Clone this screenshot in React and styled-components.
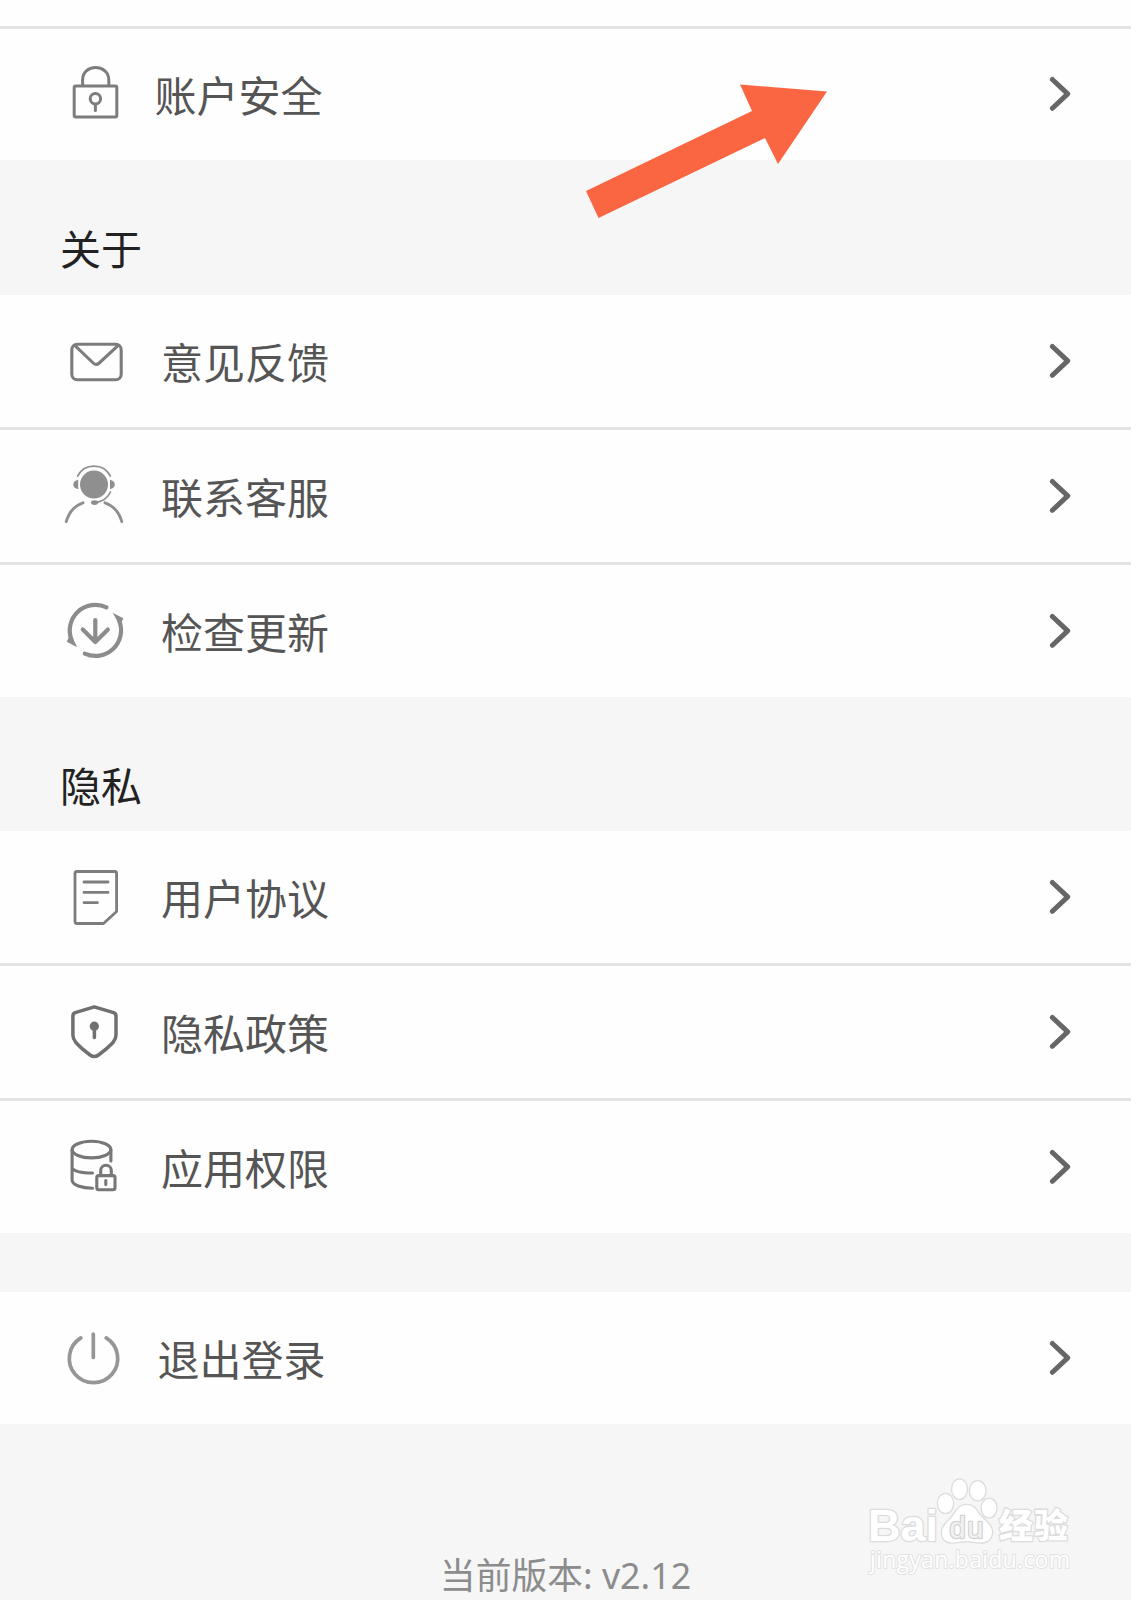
import styled, { createGlobalStyle } from "styled-components";

const GlobalStyle = createGlobalStyle`
  body {
    margin: 0;
    background-color: #f6f6f6;
  }
`;

const Page = styled.div`
  position: relative;
  display: flex;
  flex-direction: column;
  height: 1600px;
  overflow: hidden;
  background-color: #f6f6f6;
  font-family: "Noto Sans CJK SC", sans-serif;
`;

const PreviousRow = styled.div`
  flex: none;
  height: 25.6px;
  background-color: #fefefe;
  border-bottom: 3px solid #e4e4e4;
`;

const SectionTitle = styled.h2`
  flex: none;
  box-sizing: border-box;
  height: 134.8px;
  margin: 0;
  padding: 57px 60px 0;
  color: #222222;
  font-size: 41px;
  font-weight: 400;
  line-height: 60px;
`;

const List = styled.div`
  flex: none;
  display: flex;
  flex-direction: column;
  margin-top: ${(props) => props.$top || 0}px;
`;

const Row = styled.div`
  display: flex;
  align-items: center;
  height: 131.8px;
  padding: 0 58px 0 60px;
  background-color: #fefefe;

  & + & {
    border-top: 3px solid #e4e4e4;
  }
`;

const Icon = styled.svg`
  flex: none;
  width: 70px;
  height: 70px;
  fill: none;
  stroke: ${(props) => props.$color};
  stroke-width: ${(props) => props.$line}px;
  stroke-linecap: round;
  stroke-linejoin: round;
`;

const Solid = styled.g`
  fill: ${(props) => props.$color};
  stroke: none;
`;

const Thin = styled.g`
  stroke-width: 1.7px;
`;

const Label = styled.span`
  flex: 1;
  margin-left: ${(props) => props.$gap}px;
  color: #555555;
  font-size: 42px;
  line-height: 60px;
`;

const Chevron = styled.svg`
  flex: none;
  width: 24px;
  height: 36px;
  fill: none;
  stroke: #666666;
  stroke-width: 5px;
  stroke-linecap: round;
  stroke-linejoin: round;
`;

const Version = styled.div`
  margin-top: 124px;
  color: #8c8c8c;
  font-family: "Noto Sans", "Noto Sans CJK SC", sans-serif;
  font-size: 35.8px;
  line-height: 54px;
  text-align: center;
`;

const Pointer = styled.svg`
  position: absolute;
  left: 580px;
  top: 80px;
  width: 254px;
  height: 144px;
  fill: #fa6641;
`;

const Watermark = styled.svg`
  position: absolute;
  left: 860px;
  top: 1470px;
  width: 220px;
  height: 110px;
  fill: #ffffff;
  stroke: #dcdcdc;
  stroke-width: 2.6px;
  stroke-linejoin: round;
  paint-order: stroke;
`;

const Brand = styled.text`
  font: 700 44px "Liberation Sans", sans-serif;
`;

const PawText = styled.text`
  fill: #f2f2f2;
  stroke: #d2d2d2;
  font: 400 29px "Liberation Sans", sans-serif;
`;

const BrandSuffix = styled.text`
  font: 900 34px "Noto Sans CJK SC", sans-serif;
`;

const Site = styled.text`
  stroke: #e2e2e2;
  stroke-width: 2px;
  font: 400 23px "Open Sans", sans-serif;
`;

function LockIcon() {
  return (
    <Icon $color="#7c7c7c" $line={3}>
      <rect x="14.2" y="26.9" width="42.6" height="31" rx="1.5" />
      <path d="M22.6 26V21C22.6 13 28.5 8.6 35.6 8.6S48.8 13 48.8 21V26" />
      <circle cx="35.4" cy="39.8" r="5.2" />
      <path d="M35.4 46V51.5" />
    </Icon>
  );
}

function MailIcon() {
  return (
    <Icon $color="#7c7c7c" $line={3.1}>
      <rect x="11.8" y="18.2" width="49.4" height="35.6" rx="5.5" />
      <path d="M15 19.7L33.2 37Q36.2 39.8 39.2 37L58 19.7" />
    </Icon>
  );
}

function ServiceIcon() {
  return (
    <Icon $color="#8f8f8f" $line={2.9}>
      <Solid $color="#8f8f8f">
        <circle cx="34" cy="23.6" r="14" />
        <path d="M18.2 18.8Q13.3 19.7 13.3 23.5T18.2 28.2Z" />
        <path d="M50 18.8Q54.8 19.7 54.8 23.5T50 28.2Z" />
        <ellipse cx="34.6" cy="41.6" rx="3.6" ry="2.4" />
      </Solid>
      <Thin>
        <path d="M17.6 15A18.5 18.5 0 0 1 50.4 15" />
        <path d="M50.5 31Q46.5 39.7 36.5 41.4" />
      </Thin>
      <path d="M23 41.8Q10.5 46 6.2 60.7M45 41.8Q57.5 46 61.8 60.7" />
    </Icon>
  );
}

function UpdateIcon() {
  return (
    <Icon $color="#8c8c8c" $line={4.2}>
      <path d="M46.5 11.4A25.6 25.6 0 0 0 11.6 44" />
      <path d="M24.8 57.6A25.6 25.6 0 0 0 59.3 25" />
      <Solid $color="#8c8c8c">
        <path d="M6.7 45.7L10.5 38L17.3 51.3Z" />
        <path d="M52.7 16.7L63.3 22.3L60 30Z" />
      </Solid>
      <path d="M35.3 24V45M22.8 33.6L35.3 46L47.9 33.6" />
    </Icon>
  );
}

function DocumentIcon() {
  return (
    <Icon $color="#7d7d7d" $line={2.8}>
      <path d="M17 9.5H54.6Q56.6 9.5 56.6 11.5V49.5L43.5 61.5H17Q15 61.5 15 59.5V11.5Q15 9.5 17 9.5Z" />
      <path d="M24 20H48M24 30.4H48M24 40.6H37.5" />
    </Icon>
  );
}

function ShieldIcon() {
  return (
    <Icon $color="#707070" $line={3.5}>
      <path d="M34.3 9.9L53.6 15.6Q56 16.4 56 19V38Q56 42 53 45.5Q47 52 38.5 58Q34.3 61 30 58Q21.6 52 15.8 45.5Q12.9 42 12.9 38V19Q12.9 16.4 15.2 15.6Z" />
      <Solid $color="#707070">
        <circle cx="34.3" cy="29.2" r="4.6" />
      </Solid>
      <path d="M34.4 31V40.6" />
    </Icon>
  );
}

function DatabaseIcon() {
  return (
    <Icon $color="#777777" $line={3.1}>
      <ellipse cx="31.5" cy="17.6" rx="19.4" ry="8.3" />
      <path d="M12.1 18V48C12.1 53 22 56.2 32.5 56.2M12.1 36C14 39.5 23 41 32.5 41M50.9 18V29" />
      <rect x="36.8" y="43.6" width="18.2" height="14.2" rx="2" />
      <path d="M40.7 43V38.5A5.3 5.3 0 0 1 51.3 38.5V43" />
      <path d="M45.8 48.5V52.5" />
    </Icon>
  );
}

function PowerIcon() {
  return (
    <Icon $color="#969696" $line={3.7}>
      <path d="M20.8 14.9A24.2 24.2 0 1 0 46.2 14.9" />
      <path d="M33.3 11V34.5" />
    </Icon>
  );
}

function MenuRow({ icon, label, gap = 31 }) {
  return (
    <Row>
      {icon}
      <Label $gap={gap}>{label}</Label>
      <Chevron>
        <path d="M3.4 3.5L18.7 17.9L3.4 32.3" />
      </Chevron>
    </Row>
  );
}

function BaiduWatermark() {
  return (
    <Watermark>
      <Brand x="8" y="71" textLength="70" lengthAdjust="spacingAndGlyphs">
        Bai
      </Brand>
      <ellipse cx="85.5" cy="33.5" rx="7.5" ry="9.5" />
      <ellipse cx="99.5" cy="19.2" rx="7.3" ry="9.7" />
      <ellipse cx="117.7" cy="20.8" rx="7.7" ry="9.5" />
      <ellipse cx="129" cy="38" rx="7.3" ry="9.3" />
      <path d="M106.5 35C113 35 116 39 119 44C123 50 132 54 132 62C132 69 127 72.5 120 72.5C115 72.5 111 71 106.5 71S97 72.5 92 72.5C86 72.5 82 69 82 63C82 54 91 50 95 43C98 38 101 35 106.5 35Z" />
      <PawText x="89.5" y="67.5" textLength="34">
        du
      </PawText>
      <BrandSuffix x="139" y="68" textLength="69">
        经验
      </BrandSuffix>
      <Site x="10" y="97.5" textLength="200">
        jingyan.baidu.com
      </Site>
    </Watermark>
  );
}

function App() {
  return (
    <>
      <GlobalStyle />
      <Page>
        <PreviousRow />
        <List>
          <MenuRow icon={<LockIcon />} label="账户安全" gap={24.5} />
        </List>
        <SectionTitle>关于</SectionTitle>
        <List>
          <MenuRow icon={<MailIcon />} label="意见反馈" />
          <MenuRow icon={<ServiceIcon />} label="联系客服" />
          <MenuRow icon={<UpdateIcon />} label="检查更新" />
        </List>
        <SectionTitle>隐私</SectionTitle>
        <List>
          <MenuRow icon={<DocumentIcon />} label="用户协议" />
          <MenuRow icon={<ShieldIcon />} label="隐私政策" />
          <MenuRow icon={<DatabaseIcon />} label="应用权限" />
        </List>
        <List $top={59}>
          <MenuRow icon={<PowerIcon />} label="退出登录" gap={27.5} />
        </List>
        <Version>当前版本: v2.12</Version>
        <Pointer>
          <path d="M6 111L172 31L160 4.5L247 11.5L198 84L185 58L18.5 138Z" />
        </Pointer>
        <BaiduWatermark />
      </Page>
    </>
  );
}

export default App;
